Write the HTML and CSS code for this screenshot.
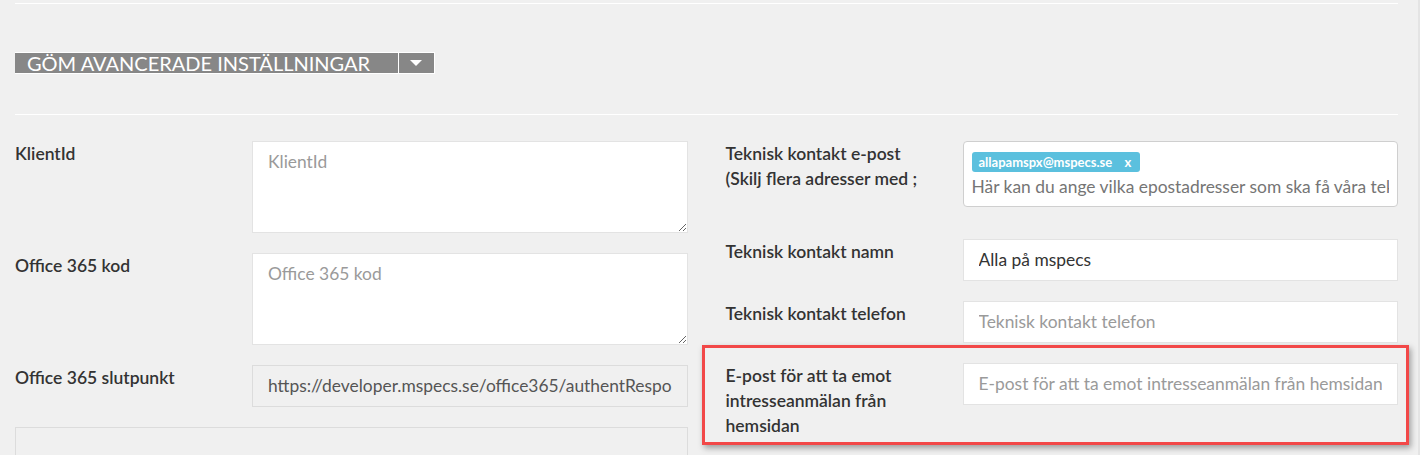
FILE: index.html
```html
<!DOCTYPE html>
<html lang="sv">
<head>
    <meta charset="UTF-8">
    <meta name="viewport" content="width=device-width, initial-scale=1.0">
    <title>Inställningar</title>
    <link rel="stylesheet" href="styles.css">
</head>
<body>
    <div class="page">
        <hr class="divider">

        <div class="toggle-bar">
            <button class="toggle-btn" type="button">
                <span class="toggle-label">Göm avancerade inställningar</span>
                <span class="toggle-caret"></span>
            </button>
        </div>

        <hr class="divider">

        <div class="form-grid">
            <div class="form-col">
                <div class="field-row">
                    <label class="field-label" for="klientId">KlientId</label>
                    <textarea id="klientId" class="field-input field-area" placeholder="KlientId"></textarea>
                </div>
                <div class="field-row">
                    <label class="field-label" for="officeKod">Office 365 kod</label>
                    <textarea id="officeKod" class="field-input field-area" placeholder="Office 365 kod"></textarea>
                </div>
                <div class="field-row">
                    <label class="field-label" for="officeSlut">Office 365 slutpunkt</label>
                    <input id="officeSlut" class="field-input readonly" type="text" readonly value="https://developer.mspecs.se/office365/authentResponse">
                </div>
                <div class="empty-box"></div>
            </div>

            <div class="form-col">
                <div class="field-row field-row-tags">
                    <label class="field-label" for="tekEpost">Teknisk kontakt e-post (Skilj flera adresser med ;</label>
                    <div class="tag-input">
                        <span class="tag">allapamspx@mspecs.se <span class="tag-remove">x</span></span>
                        <input id="tekEpost" type="text" placeholder="Här kan du ange vilka epostadresser som ska få våra tekniska utskick">
                    </div>
                </div>
                <div class="field-row">
                    <label class="field-label" for="tekNamn">Teknisk kontakt namn</label>
                    <input id="tekNamn" class="field-input" type="text" value="Alla på mspecs">
                </div>
                <div class="field-row">
                    <label class="field-label" for="tekTel">Teknisk kontakt telefon</label>
                    <input id="tekTel" class="field-input" type="text" placeholder="Teknisk kontakt telefon">
                </div>
                <div class="field-row highlight">
                    <label class="field-label" for="intresse">E-post för att ta emot intresseanmälan från hemsidan</label>
                    <input id="intresse" class="field-input" type="text" placeholder="E-post för att ta emot intresseanmälan från hemsidan">
                </div>
            </div>
        </div>
    </div>
</body>
</html>
```

FILE: styles.css
```css
html, body {
    margin: 0;
    padding: 0;
    height: 100%;
    overflow: hidden;
}
body {
    font-family: Lato, "Open Sans", Arial, sans-serif;
    background-color: #f0f0f0;
    color: #333;
}
.page {
    padding: 3px 20px 0 15px;
    border-right: 2px solid #e4e4e4;
    min-height: 100%;
    box-sizing: border-box;
}
.divider {
    border: none;
    border-top: 1px solid #fff;
    margin: 0;
}

/* advanced settings toggle */
.toggle-bar {
    padding: 48px 0 40px;
}
.toggle-btn {
    display: flex;
    align-items: stretch;
    height: 22px;
    padding: 0;
    border: 1px solid #fff;
    border-left: none;
    background-color: #878787;
    color: #fff;
    font-family: inherit;
    cursor: pointer;
}
.toggle-label {
    font-size: 20px;
    line-height: 20px;
    text-transform: uppercase;
    padding: 0 28px 0 12px;
    border-right: 1px solid #fff;
}
.toggle-caret {
    width: 35px;
    position: relative;
}
.toggle-caret::after {
    content: "";
    position: absolute;
    left: 11px;
    top: 7px;
    border-left: 6px solid transparent;
    border-right: 6px solid transparent;
    border-top: 6px solid #fff;
}

/* form */
.form-grid {
    display: grid;
    grid-template-columns: 1fr 1fr;
    column-gap: 38px;
    padding-top: 26px;
}
.field-row {
    display: grid;
    grid-template-columns: 237px 1fr;
    align-items: start;
    margin-bottom: 20px;
}
.field-row-tags {
    margin-bottom: 32px;
}
.field-label {
    font-size: 17.5px;
    font-weight: 600;
    line-height: 25px;
    padding-right: 30px;
    color: #333;
}
.field-input {
    display: block;
    width: 100%;
    box-sizing: border-box;
    margin: 0;
    padding: 10px 15px;
    font-family: inherit;
    font-size: 17.4px;
    line-height: 20px;
    color: #333;
    background-color: #fff;
    border: 1px solid #e3e3e3;
    border-radius: 0;
    outline: none;
}
.field-input::placeholder {
    color: #9a9a9a;
}
.field-area {
    height: 92px;
    resize: vertical;
}
.field-input.readonly {
    background-color: #f0f0f0;
    color: #555;
    border-color: #dcdcdc;
}
.empty-box {
    height: 80px;
    border: 1px solid #dcdcdc;
}

/* tag input */
.tag-input {
    background-color: #fff;
    border: 1px solid #cfcfcf;
    border-radius: 4px;
    padding: 10px 8px 9px;
    overflow: hidden;
}
.tag {
    display: inline-block;
    height: 20px;
    line-height: 20px;
    padding: 0 9px 0 7px;
    border-radius: 3px;
    background-color: #5bc0de;
    color: #fff;
    font-size: 13px;
    font-weight: 700;
    vertical-align: top;
}
.tag-remove {
    margin-left: 9px;
}
.tag-input input {
    display: block;
    width: 100%;
    margin: 5px 0 0;
    padding: 0;
    border: none;
    outline: none;
    font-family: inherit;
    font-size: 17.4px;
    line-height: 20px;
    height: 20px;
    color: #333;
}
.tag-input input::placeholder {
    color: #757575;
}

/* highlighted row */
.highlight {
    margin: -18px -11px 0 -24px;
    padding: 15px 8px 4px 21px;
    border: 3px solid #f24848;
    box-shadow: 2px 3px 6px rgba(0, 0, 0, 0.35);
}
```
